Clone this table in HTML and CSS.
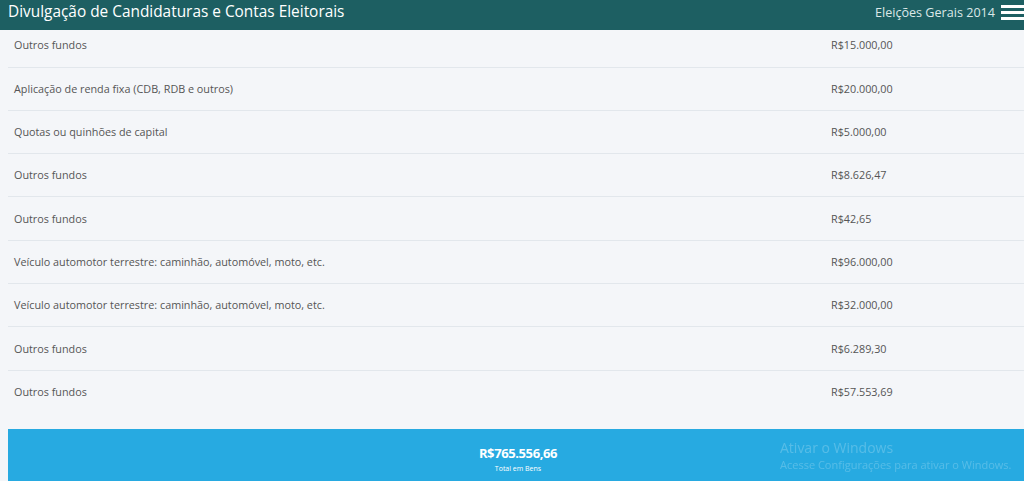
FILE: index.html
```html
<!DOCTYPE html>
<html lang="pt-BR">
<head>
<meta charset="utf-8">
<title>Divulgação de Candidaturas e Contas Eleitorais</title>
<link rel="stylesheet" href="styles.css">
</head>
<body>
<header class="topbar">
  <div class="brand">Divulgação de Candidaturas e Contas Eleitorais</div>
  <div class="topbar-right">
    <span class="election">Eleições Gerais 2014</span>
    <span class="burger"><i></i><i></i><i></i></span>
  </div>
</header>
<main class="content">
  <div class="assets">
    <div class="row"><span class="label">Outros fundos</span><span class="value">R$15.000,00</span></div>
    <div class="row"><span class="label">Aplicação de renda fixa (CDB, RDB e outros)</span><span class="value">R$20.000,00</span></div>
    <div class="row"><span class="label">Quotas ou quinhões de capital</span><span class="value">R$5.000,00</span></div>
    <div class="row"><span class="label">Outros fundos</span><span class="value">R$8.626,47</span></div>
    <div class="row"><span class="label">Outros fundos</span><span class="value">R$42,65</span></div>
    <div class="row"><span class="label">Veículo automotor terrestre: caminhão, automóvel, moto, etc.</span><span class="value">R$96.000,00</span></div>
    <div class="row"><span class="label">Veículo automotor terrestre: caminhão, automóvel, moto, etc.</span><span class="value">R$32.000,00</span></div>
    <div class="row"><span class="label">Outros fundos</span><span class="value">R$6.289,30</span></div>
    <div class="row"><span class="label">Outros fundos</span><span class="value">R$57.553,69</span></div>
  </div>
  <div class="total">
    <div class="total-value">R$765.556,66</div>
    <div class="total-label">Total em Bens</div>
  </div>
</main>
<div class="watermark">
  <div class="wm-title">Ativar o Windows</div>
  <div class="wm-sub">Acesse Configurações para ativar o Windows.</div>
</div>
</body>
</html>
```

FILE: styles.css
```css
* { box-sizing: border-box; }
html, body { margin: 0; padding: 0; }
body {
  background: #f4f6f9;
  font-family: "Open Sans", "Noto Sans", sans-serif;
  color: #555;
  overflow: hidden;
}
.topbar {
  position: fixed;
  top: 0; left: 0; right: 0;
  height: 30px;
  background: #1d5f62;
  color: #fff;
  display: flex;
  align-items: center;
  justify-content: space-between;
  padding-left: 8px;
  z-index: 2;
}
.brand {
  font-size: 15.4px;
  line-height: 20px;
  margin-top: -7px;
}
.topbar-right {
  display: flex;
  align-items: center;
  gap: 6px;
  margin-top: -6px;
}
.election {
  font-size: 12.6px;
  color: #dbe8e8;
}
.burger {
  display: flex;
  flex-direction: column;
  gap: 3px;
  width: 23px;
}
.burger i {
  display: block;
  height: 3px;
  background: #fff;
}
.content {
  padding: 24.2px 0 0 8px;
}
.row {
  display: grid;
  grid-template-columns: 817px 1fr;
  font-size: 10.8px;
  line-height: 20px;
  padding: 11.17px 0;
  border-bottom: 1px solid #e2e7ec;
}
.row:last-child { border-bottom: none; }
.label { padding-left: 6px; }
.value { padding-left: 6px; }
.total {
  margin-top: 16px;
  background: #27aae1;
  color: #fff;
  text-align: center;
  padding: 15px 0 20px 4px;
}
.total-value {
  font-size: 13px;
  font-weight: 700;
  line-height: 18px;
  letter-spacing: -0.4px;
}
.total-label {
  font-size: 7px;
  line-height: 14px;
}
.watermark {
  position: fixed;
  left: 780px;
  top: 439px;
  color: rgba(255,255,255,0.22);
  z-index: 3;
}
.wm-title { font-size: 14px; line-height: 18px; }
.wm-sub { font-size: 11px; line-height: 16px; }
```
